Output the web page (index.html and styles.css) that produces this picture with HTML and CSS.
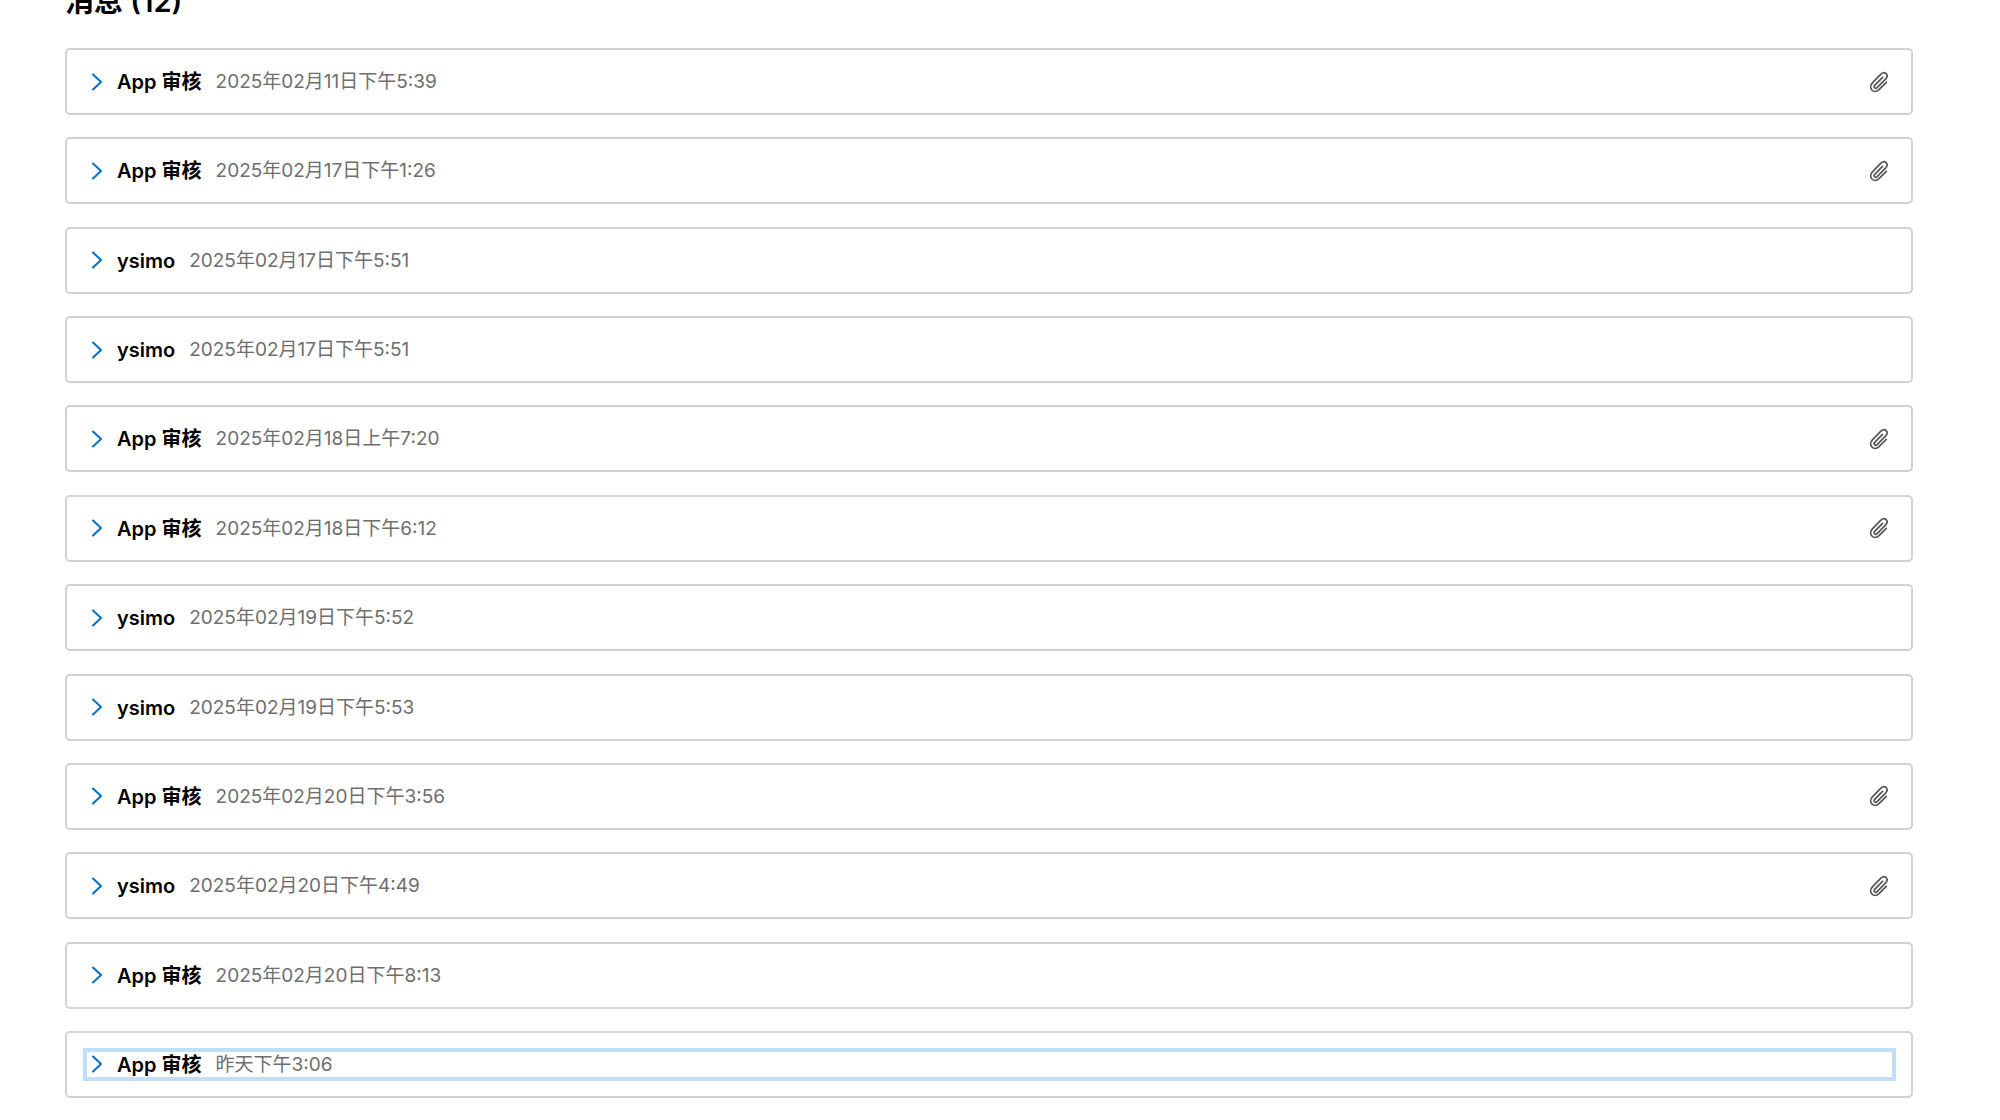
FILE: index.html
```html
<!DOCTYPE html>
<html lang="zh-CN">
<head>
    <meta charset="utf-8">
    <title>消息</title>
    <link rel="stylesheet" href="styles.css">
</head>
<body>
<!-- Iconos compartidos -->
<svg class="sprite" aria-hidden="true">
    <symbol id="chevron" viewBox="0 0 12 18">
        <path d="M2 1.5 L10 9 L2 16.5" fill="none" stroke="currentColor" stroke-width="2" stroke-linecap="round" stroke-linejoin="round"/>
    </symbol>
    <symbol id="clip" viewBox="0 0 20 24">
        <path d="M13.5 6.8 L5.7 14.8 C4.2 16.4 6.2 18.8 8.1 17.1 L16.7 8.3 C20.4 4.3 15.8 -0.2 11.9 3.5 L3.4 12.2 C-1.4 17.4 4.8 23.9 10 19 L17.3 11.7" transform="translate(0 .6)" fill="none" stroke="currentColor" stroke-width="1.7" stroke-linecap="round" stroke-linejoin="round"/>
    </symbol>
</svg>

<main class="messages">
    <h2 class="messages-title">消息 (12)</h2>
    <ul class="message-list">
        <li class="message">
            <button type="button" class="message-toggle" aria-expanded="false">
                <svg class="chevron"><use href="#chevron"/></svg>
                <span class="sender">App 审核</span>
                <span class="date">2025年02月11日下午5:39</span>
                <svg class="clip"><use href="#clip"/></svg>
            </button>
        </li>
        <li class="message">
            <button type="button" class="message-toggle" aria-expanded="false">
                <svg class="chevron"><use href="#chevron"/></svg>
                <span class="sender">App 审核</span>
                <span class="date">2025年02月17日下午1:26</span>
                <svg class="clip"><use href="#clip"/></svg>
            </button>
        </li>
        <li class="message">
            <button type="button" class="message-toggle" aria-expanded="false">
                <svg class="chevron"><use href="#chevron"/></svg>
                <span class="sender">ysimo</span>
                <span class="date">2025年02月17日下午5:51</span>
            </button>
        </li>
        <li class="message">
            <button type="button" class="message-toggle" aria-expanded="false">
                <svg class="chevron"><use href="#chevron"/></svg>
                <span class="sender">ysimo</span>
                <span class="date">2025年02月17日下午5:51</span>
            </button>
        </li>
        <li class="message">
            <button type="button" class="message-toggle" aria-expanded="false">
                <svg class="chevron"><use href="#chevron"/></svg>
                <span class="sender">App 审核</span>
                <span class="date">2025年02月18日上午7:20</span>
                <svg class="clip"><use href="#clip"/></svg>
            </button>
        </li>
        <li class="message">
            <button type="button" class="message-toggle" aria-expanded="false">
                <svg class="chevron"><use href="#chevron"/></svg>
                <span class="sender">App 审核</span>
                <span class="date">2025年02月18日下午6:12</span>
                <svg class="clip"><use href="#clip"/></svg>
            </button>
        </li>
        <li class="message">
            <button type="button" class="message-toggle" aria-expanded="false">
                <svg class="chevron"><use href="#chevron"/></svg>
                <span class="sender">ysimo</span>
                <span class="date">2025年02月19日下午5:52</span>
            </button>
        </li>
        <li class="message">
            <button type="button" class="message-toggle" aria-expanded="false">
                <svg class="chevron"><use href="#chevron"/></svg>
                <span class="sender">ysimo</span>
                <span class="date">2025年02月19日下午5:53</span>
            </button>
        </li>
        <li class="message">
            <button type="button" class="message-toggle" aria-expanded="false">
                <svg class="chevron"><use href="#chevron"/></svg>
                <span class="sender">App 审核</span>
                <span class="date">2025年02月20日下午3:56</span>
                <svg class="clip"><use href="#clip"/></svg>
            </button>
        </li>
        <li class="message">
            <button type="button" class="message-toggle" aria-expanded="false">
                <svg class="chevron"><use href="#chevron"/></svg>
                <span class="sender">ysimo</span>
                <span class="date">2025年02月20日下午4:49</span>
                <svg class="clip"><use href="#clip"/></svg>
            </button>
        </li>
        <li class="message">
            <button type="button" class="message-toggle" aria-expanded="false">
                <svg class="chevron"><use href="#chevron"/></svg>
                <span class="sender">App 审核</span>
                <span class="date">2025年02月20日下午8:13</span>
            </button>
        </li>
        <li class="message">
            <button type="button" class="message-toggle focused" aria-expanded="false">
                <svg class="chevron"><use href="#chevron"/></svg>
                <span class="sender">App 审核</span>
                <span class="date">昨天下午3:06</span>
            </button>
        </li>
    </ul>
</main>
</body>
</html>
```

FILE: styles.css
```css
* {
    box-sizing: border-box;
}

body {
    margin: 0;
    background-color: #fff;
    color: #000;
    font-family: Inter, "Noto Sans CJK SC", sans-serif;
}

.sprite {
    display: none;
}

/* La lista ocupa todo el alto de la ventana */
.messages {
    display: flex;
    flex-direction: column;
    min-height: 100vh;
    padding: 0 87px 22px 65px;
    overflow: hidden;
}

.messages-title {
    margin: -16px 0 28px;
    font-size: 29px;
    line-height: 36px;
    font-weight: 600;
}

.message-list {
    flex: 1;
    display: flex;
    flex-direction: column;
    justify-content: space-between;
    gap: 20px;
    margin: 0;
    padding: 0;
    list-style: none;
}

.message {
    padding: 19px 19px 19px 20px;
    border: 2px solid #d2d2d4;
    border-radius: 5px;
}

.message-toggle {
    display: flex;
    align-items: center;
    width: 100%;
    height: 25px;
    padding: 0 3px 0 4px;
    border: 0;
    background: none;
    color: inherit;
    font-family: inherit;
    line-height: 24px;
    text-align: left;
    cursor: pointer;
}

.message-toggle:focus-visible,
.message-toggle.focused {
    outline: 4px solid #c1dff8;
}

.chevron {
    width: 12px;
    height: 18px;
    margin-right: 14px;
    color: #0070c9;
}

.sender,
.date {
    padding-top: 1px;
}

.sender {
    margin-right: 14px;
    font-size: 20px;
    font-weight: 600;
}

.date {
    font-size: 19px;
    color: #6e6e6e;
}

.clip {
    width: 20px;
    height: 24px;
    margin-left: auto;
    color: #555;
}
```
